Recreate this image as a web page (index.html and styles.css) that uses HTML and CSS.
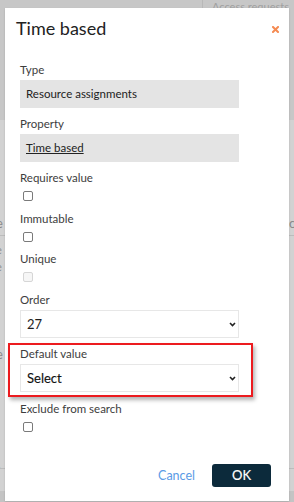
FILE: index.html
```html
<html>
<head>
    <meta charset="UTF-8">
    <link rel="stylesheet" href="styles.css">
</head>

<body>

<div class="backdrop">
    <div class="bg-top"></div>
    <div class="bg-tab-line"></div>
    <div class="bg-tab">Access requests</div>
    <div class="bg-text bg-left" style="top: 215px">e</div>
    <div class="bg-text bg-right" style="top: 215px">ic</div>
    <div class="bg-line" style="top: 235px"></div>
    <div class="bg-text bg-left small" style="top: 243px">e</div>
    <div class="bg-text bg-left small" style="top: 260px">e</div>
    <div class="bg-text bg-left" style="top: 346px">e</div>
    <div class="bg-text bg-left small" style="top: 462px">r</div>
    <div class="bg-line" style="top: 468px"></div>
    <div class="bg-bottom"></div>
</div>

<div class="modal">
    <div class="modal-header">
        <h1>Time based</h1>
        <span class="close">
            <svg width="7" height="7" viewBox="0 0 7 7">
                <path d="M1 1L6 6M6 1L1 6" stroke="#f58b52" stroke-width="2" stroke-linecap="square"/>
            </svg>
        </span>
    </div>

    <form class="modal-body" onsubmit="return false">
        <div class="field">
            <label>Type</label>
            <div class="readonly">Resource assignments</div>
        </div>
        <div class="field">
            <label>Property</label>
            <div class="readonly"><a href="#">Time based</a></div>
        </div>
        <div class="field check">
            <label for="requires">Requires value</label>
            <input type="checkbox" id="requires"/>
        </div>
        <div class="field check">
            <label for="immutable">Immutable</label>
            <input type="checkbox" id="immutable"/>
        </div>
        <div class="field check">
            <label for="unique">Unique</label>
            <input type="checkbox" id="unique" disabled/>
        </div>
        <div class="field">
            <label for="order">Order</label>
            <div class="select-wrap">
                <select id="order">
                    <option>27</option>
                </select>
                <svg class="chevron" width="7" height="5" viewBox="0 0 7 5">
                    <path d="M1 1L3.5 3.5L6 1" fill="none" stroke="#222" stroke-width="1.6"/>
                </svg>
            </div>
        </div>
        <div class="field highlight">
            <label for="default">Default value</label>
            <div class="select-wrap">
                <select id="default" class="strong">
                    <option>Select</option>
                </select>
                <svg class="chevron" width="7" height="5" viewBox="0 0 7 5">
                    <path d="M1 1L3.5 3.5L6 1" fill="none" stroke="#222" stroke-width="1.6"/>
                </svg>
            </div>
        </div>
        <div class="field check">
            <label for="exclude">Exclude from search</label>
            <input type="checkbox" id="exclude"/>
        </div>
    </form>

    <div class="modal-footer">
        <a href="#" class="cancel">Cancel</a>
        <button type="button" class="ok">OK</button>
    </div>
</div>

</body>

</html>
```

FILE: styles.css
```css
body {
    position: relative;
    margin: 0;
    width: 294px;
    height: 502px;
    overflow: hidden;
    background: #d2d2d2;
    font-family: Lato, "Noto Sans", sans-serif;
}

/* page behind the dialog */
.backdrop .bg-top {
    position: absolute;
    top: 0;
    left: 0;
    width: 100%;
    height: 120px;
    background: #c7c7c7;
}

.backdrop .bg-tab-line {
    position: absolute;
    top: 0;
    left: 202px;
    width: 1px;
    height: 8px;
    background: #b8b8b8;
}

.backdrop .bg-tab {
    position: absolute;
    top: 0;
    left: 212px;
    font-size: 11px;
    color: #a0a0a0;
    white-space: nowrap;
}

.backdrop .bg-text {
    position: absolute;
    font-size: 13px;
    color: #8a8a8a;
}

.backdrop .bg-text.small {
    font-size: 11px;
}

.backdrop .bg-left {
    left: -4px;
}

.backdrop .bg-right {
    left: 286px;
}

.backdrop .bg-line {
    position: absolute;
    left: 0;
    width: 100%;
    height: 1px;
    background: #bcbcbc;
}

.backdrop .bg-bottom {
    position: absolute;
    top: 491px;
    left: 0;
    width: 100%;
    height: 11px;
    background: #c4c4c4;
}

/* dialog */
.modal {
    position: absolute;
    top: 8px;
    left: 5px;
    width: 284px;
    background: white;
    box-shadow: 0 1px 2px rgba(0, 0, 0, 0.15);
}

.modal-header {
    display: flex;
    justify-content: space-between;
    align-items: center;
    padding: 8px 10px 0 11px;
}

.modal-header h1 {
    margin: 0;
    font-size: 18px;
    line-height: 24px;
    font-weight: normal;
    color: #222;
}

.modal-header .close {
    display: flex;
    margin-top: 2px;
}

.modal-body {
    display: flex;
    flex-direction: column;
    margin: 0;
    padding: 22px 15px 0;
}

.field {
    display: flex;
    flex-direction: column;
    margin-bottom: 8px;
}

.field label {
    margin-bottom: 2px;
    font-size: 11.5px;
    line-height: 16px;
    color: #3d3d3d;
}

.field .readonly {
    box-sizing: border-box;
    width: 219px;
    height: 28px;
    padding-left: 6px;
    background: #e4e4e4;
    font-size: 11.5px;
    line-height: 28px;
    color: #222;
}

.field .readonly a {
    color: #222;
    text-decoration: underline;
}

.field.check {
    margin-bottom: 9.5px;
}

.field.check input {
    appearance: none;
    box-sizing: border-box;
    width: 10px;
    height: 10px;
    margin: 3px 0 0 3px;
    border: 1px solid #7a7a7a;
    border-radius: 2px;
    background: white;
}

.field.check input:disabled {
    border-color: #d6d6d6;
    background: #f6f6f6;
}

.select-wrap {
    position: relative;
    width: 219px;
}

.select-wrap select {
    display: block;
    appearance: none;
    box-sizing: border-box;
    width: 219px;
    height: 28px;
    padding: 0 0 0 6px;
    border: 1px solid #e7e7e7;
    border-radius: 0;
    background: white;
    font-family: Lato, "Noto Sans", sans-serif;
    font-size: 13px;
    color: #1e1e1e;
    outline: none;
}

.select-wrap select.strong {
    color: #111;
    -webkit-text-stroke: 0.15px #111;
}

.select-wrap .chevron {
    position: absolute;
    top: 12px;
    right: 3px;
}

.field.highlight {
    width: 219px;
    margin: -2.5px 0 4px -12px;
    padding: 1px 12px 3px 10px;
    border: 2px solid #ec1b1f;
    box-shadow: 2px 3px 4px rgba(0, 0, 0, 0.3);
}

.modal-footer {
    display: flex;
    justify-content: flex-end;
    align-items: center;
    gap: 17px;
    padding: 22px 18px 14px;
}

.modal-footer .cancel {
    font-size: 12.5px;
    color: #5a9be6;
    text-decoration: none;
}

.modal-footer .ok {
    width: 59px;
    height: 23px;
    border: none;
    border-radius: 3px;
    background: #0c2a3b;
    color: white;
    font-family: Lato, "Noto Sans", sans-serif;
    font-size: 13px;
    -webkit-text-stroke: 0.15px white;
    cursor: pointer;
}
```
